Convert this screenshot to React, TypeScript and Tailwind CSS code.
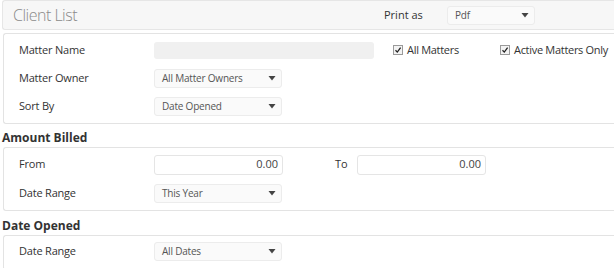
import React from 'react';

const font = { fontFamily: '"Open Sans", "Noto Sans", sans-serif' };

function Caret() {
  return (
    <svg width="8" height="5" viewBox="0 0 8 5" className="shrink-0">
      <path d="M0.5 0h7L4 4.5z" fill="#444" />
    </svg>
  );
}

function Select({ value, w = 'w-[128px]' }: { value: string; w?: string }) {
  return (
    <div className={`${w} h-[19px] flex items-center justify-between pl-[7px] pr-[5px] bg-[#fafafa] border border-[#ececec] rounded-[3px]`}>
      <span className="text-[10px] tracking-[-0.2px] text-[#555]">{value}</span>
      <Caret />
    </div>
  );
}

function Check({ label }: { label: string }) {
  return (
    <label className="flex items-center gap-[4px] whitespace-nowrap text-[11px] tracking-[-0.3px] text-[#333]">
      <span className="w-[10px] h-[10px] border border-[#9a9a9a] bg-[#f3f3f3] flex items-center justify-center">
        <svg width="8" height="8" viewBox="0 0 8 8">
          <path d="M1.5 4.2l1.8 1.9L6.6 1.6" stroke="#222" strokeWidth="1.3" fill="none" />
        </svg>
      </span>
      {label}
    </label>
  );
}

function Row({ label, h = 'h-[29px]', children }: { label: string; h?: string; children: React.ReactNode }) {
  return (
    <div className={`flex items-center ${h}`}>
      <div className="w-[135px] shrink-0 text-[11px] tracking-[-0.2px] text-[#333]">{label}</div>
      {children}
    </div>
  );
}

function Amount() {
  return (
    <div className="w-[129px] h-[20px] flex items-center justify-end px-[4px] bg-white border border-[#e5e5e5] rounded-[3px] text-[11px] text-[#444]">
      0.00
    </div>
  );
}

export default function App() {
  return (
    <div className="w-[614px] h-[268px] overflow-hidden bg-white" style={font}>
      <div className="ml-[2px] h-[30px] flex items-center bg-[#f7f7f7] border border-[#e6e6e6] border-r-0 rounded-l-[3px]">
        <div className="pl-[10px] w-[381px] text-[16px] tracking-[-0.5px] font-light text-[#8a8a8a]">Client List</div>
        <div className="w-[63px] text-[11px] text-[#333]">Print as</div>
        <Select value="Pdf" w="w-[88px]" />
      </div>

      <div className="ml-[3px] mt-[3px] border border-[#e3e3e3] border-r-0 rounded-l-[3px] pl-[15px] pt-[2px] pb-[3px]">
        <Row label="Matter Name" h="h-[28px]">
          <div className="w-[220px] h-[17px] bg-[#f0f0f0] rounded-[3px]" />
          <div className="ml-[19px] w-[107px]">
            <Check label="All Matters" />
          </div>
          <Check label="Active Matters Only" />
        </Row>
        <Row label="Matter Owner" h="h-[28px]">
          <Select value="All Matter Owners" />
        </Row>
        <Row label="Sort By" h="h-[28px]">
          <Select value="Date Opened" />
        </Row>
      </div>

      <div className="pl-[2px] pt-[6px] h-[23px] text-[12px] leading-[16px] font-bold text-[#333]">Amount Billed</div>
      <div className="ml-[3px] border border-[#e3e3e3] border-r-0 rounded-l-[3px] pl-[15px] pt-[2px] pb-[2px]">
        <Row label="From">
          <Amount />
          <div className="w-[74px] pl-[52px] text-[11px] text-[#333]">To</div>
          <Amount />
        </Row>
        <Row label="Date Range">
          <Select value="This Year" />
        </Row>
      </div>

      <div className="pl-[2px] pt-[7px] h-[24px] text-[12px] leading-[16px] font-bold text-[#333]">Date Opened</div>
      <div className="ml-[3px] border border-[#e3e3e3] border-r-0 rounded-l-[3px] pl-[15px] pt-[1px] pb-[3px]">
        <Row label="Date Range">
          <Select value="All Dates" />
        </Row>
      </div>
    </div>
  );
}
